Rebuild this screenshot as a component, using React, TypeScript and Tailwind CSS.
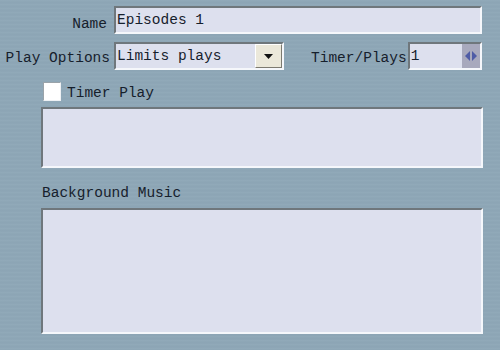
import React from "react";

const sunken =
  "border-2 border-t-[#6f777c] border-l-[#6f777c] border-b-[#f5f7fb] border-r-[#f5f7fb] bg-[#dde0ee]";

export default function App() {
  return (
    <div className="w-[500px] h-[350px] overflow-hidden bg-[#8ea7b7] bg-[repeating-linear-gradient(180deg,rgba(255,255,255,0.025)_0px,rgba(255,255,255,0.025)_1px,rgba(0,0,0,0.015)_2px,rgba(0,0,0,0)_4px)] font-['Liberation_Mono',monospace] text-[14.5px] leading-[16px] text-[#16202c] pt-[6px]">
      {/* Row 1: Name */}
      <div className="flex h-[28px]">
        <div className="w-[110px] text-right pr-[3px] pt-[10px]">Name</div>
        <div className={`${sunken} ml-[4px] w-[368px] h-[28px] pl-[1px] pt-[4px]`}>Episodes 1</div>
      </div>

      {/* Row 2: Play Options / Timer */}
      <div className="flex h-[28px] mt-[8px]">
        <div className="w-[110px] text-right pt-[8px] whitespace-nowrap">Play Options</div>
        <div className={`${sunken} ml-[4px] w-[170px] h-[28px] flex`}>
          <div className="flex-1 pl-[1px] pt-[4px] whitespace-nowrap">Limits plays</div>
          <div className="w-[27px] h-full bg-[#ebe8da] border border-t-white border-l-white border-b-[#7d7a70] border-r-[#7d7a70] flex items-center justify-center">
            <svg width="9" height="5" viewBox="0 0 9 5">
              <polygon points="0,0 9,0 4.5,5" fill="#111" />
            </svg>
          </div>
        </div>
        <div className="ml-[27px] pt-[8px] whitespace-nowrap">Timer/Plays</div>
        <div className={`${sunken} ml-[1px] w-[74px] h-[28px] flex`}>
          <div className="flex-1 pl-[1px] pt-[4px]">1</div>
          <div className="w-[18px] h-full bg-[#a8a9bd] flex items-center justify-center">
            <svg width="12" height="10" viewBox="0 0 12 10">
              <polygon points="0,5 5,0 5,10" fill="#4f5ca6" />
              <polygon points="12,5 7,0 7,10" fill="#4f5ca6" />
            </svg>
          </div>
        </div>
      </div>

      {/* Row 3: Timer Play checkbox */}
      <div className="flex h-[19px] mt-[12px] ml-[43px]">
        <div className="w-[18px] h-[19px] bg-white border border-t-[#9aa3a9] border-l-[#9aa3a9] border-b-[#eef1f4] border-r-[#eef1f4]" />
        <div className="ml-[6px] pt-[3px]">Timer Play</div>
      </div>

      {/* Timer textarea */}
      <div className={`${sunken} mt-[6px] ml-[41px] w-[442px] h-[61px]`} />

      {/* Background Music */}
      <div className="mt-[17px] ml-[42px]">Background Music</div>
      <div className={`${sunken} mt-[7px] ml-[41px] w-[442px] h-[126px]`} />
    </div>
  );
}
